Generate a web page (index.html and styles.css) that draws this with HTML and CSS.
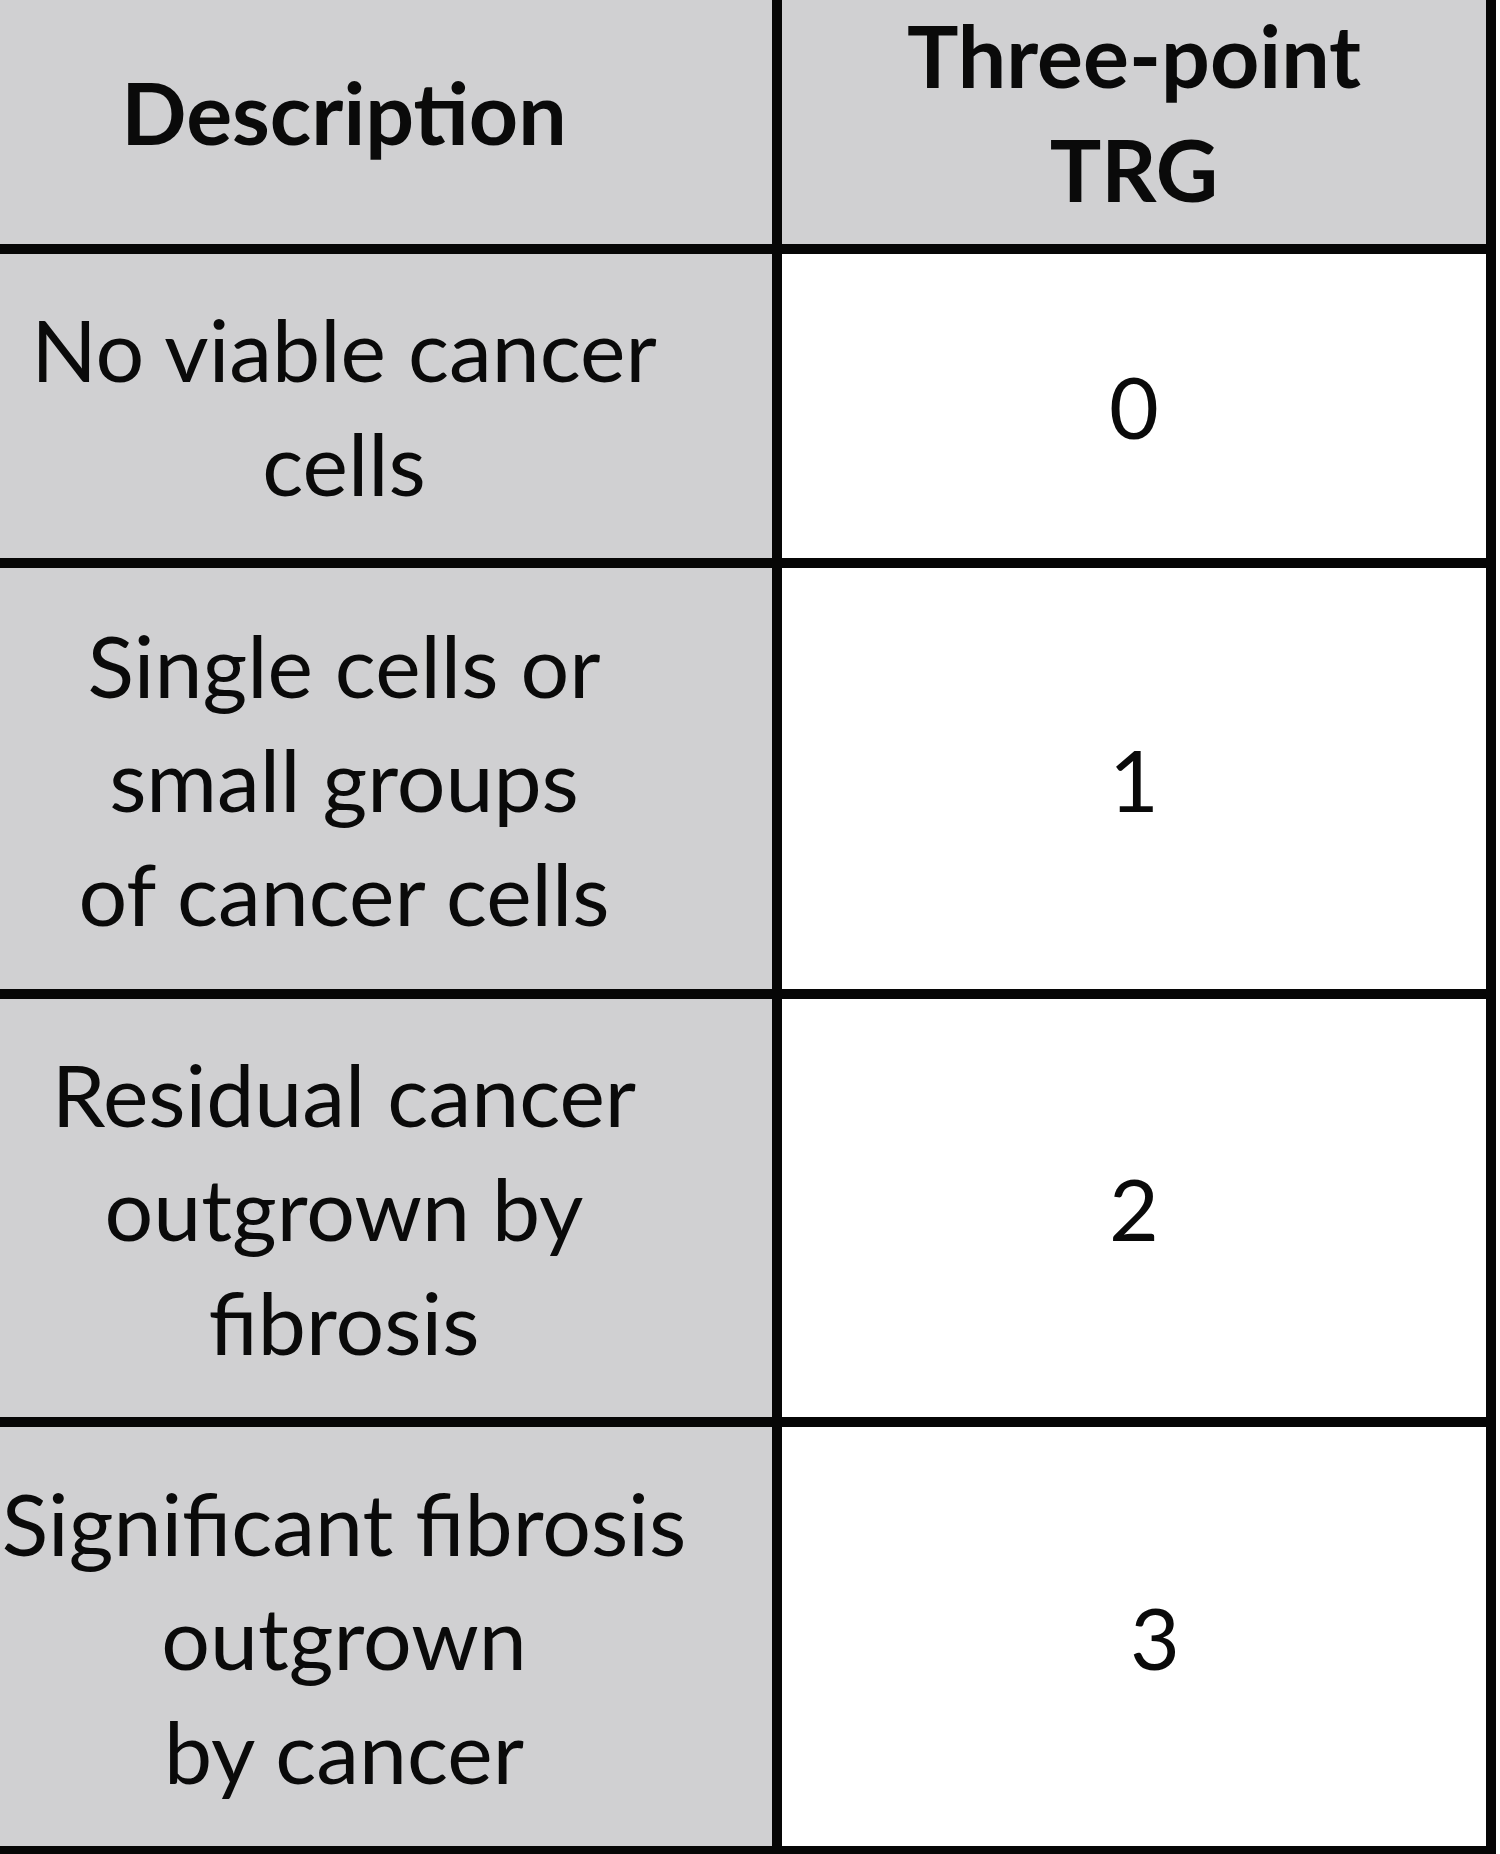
FILE: index.html
```html
<!DOCTYPE html>
<html lang="en">
<head>
<meta charset="utf-8">
<title>TRG table</title>
<link rel="stylesheet" href="styles.css">
</head>
<body>
<div class="trg" role="table">
  <div class="cell head grey" role="columnheader">Description</div>
  <div class="cell head grey" role="columnheader">Three-point<br>TRG</div>

  <div class="cell grey" role="cell">No viable cancer<br>cells</div>
  <div class="cell white" role="cell">0</div>

  <div class="cell grey" role="cell">Single cells or<br>small groups<br>of cancer cells</div>
  <div class="cell white" role="cell">1</div>

  <div class="cell grey" role="cell">Residual cancer<br>outgrown by<br>fibrosis</div>
  <div class="cell white" role="cell">2</div>

  <div class="cell grey" role="cell">Significant fibrosis<br>outgrown<br>by cancer</div>
  <div class="cell white" role="cell"><span class="shifted">3</span></div>
</div>
</body>
</html>
```

FILE: styles.css
```css
html, body {
  margin: 0;
  padding: 0;
  background: #ffffff;
  overflow: hidden;
}

.trg {
  display: grid;
  grid-template-columns: 866px 714px;
  grid-template-rows: 274px 314px 431px 428px 429px;
  margin: -30px 0 0 -94px;
  width: max-content;
  border-left: 10px solid #060606;
  border-top: 10px solid #060606;
  font-family: Lato, "Open Sans", "Liberation Sans", sans-serif;
  font-size: 86px;
  line-height: 114px;
  color: #0a0a0a;
}

.cell {
  box-sizing: border-box;
  border-right: 10px solid #060606;
  border-bottom: 10px solid #060606;
  display: flex;
  align-items: center;
  justify-content: center;
  text-align: center;
  white-space: nowrap;
}

.grey {
  background: #d0d0d2;
}

.white {
  background: #ffffff;
}

.head {
  font-weight: 700;
}

.shifted {
  padding-left: 42px;
}
```
